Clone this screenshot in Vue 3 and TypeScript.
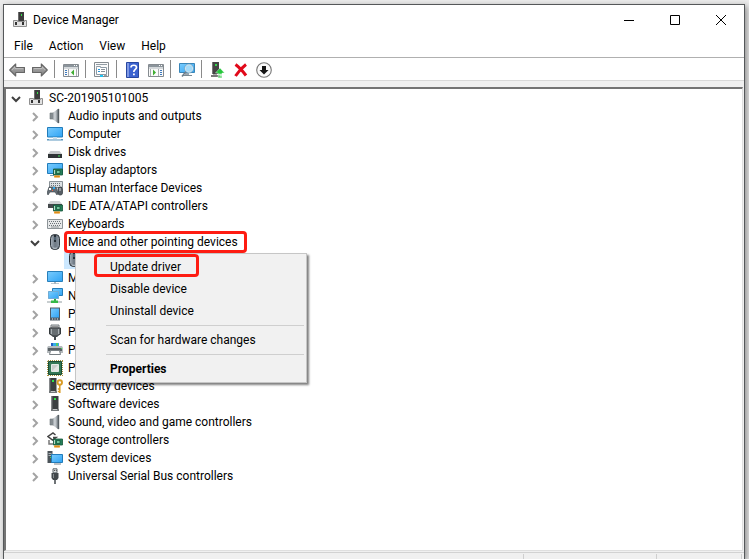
<script setup lang="ts">
interface ToolItem {
  icon?: string
  label?: string
}

interface DeviceNode {
  label: string
  icon: string
  marked?: boolean
}

const menus: string[] = ['File', 'Action', 'View', 'Help']

const tools: ToolItem[] = [
  { icon: 'back', label: 'Back' },
  { icon: 'forward', label: 'Forward' },
  {},
  { icon: 'console-tree', label: 'Show/Hide Console Tree' },
  {},
  { icon: 'properties', label: 'Properties' },
  {},
  { icon: 'help', label: 'Help' },
  { icon: 'action-pane', label: 'Show/Hide Action Pane' },
  {},
  { icon: 'scan', label: 'Scan for hardware changes' },
  {},
  { icon: 'update', label: 'Update device driver' },
  { icon: 'uninstall', label: 'Uninstall device' },
  { icon: 'disable', label: 'Disable device' },
]

const devices: DeviceNode[] = [
  { label: 'Audio inputs and outputs', icon: 'speaker' },
  { label: 'Computer', icon: 'computer' },
  { label: 'Disk drives', icon: 'disk' },
  { label: 'Display adaptors', icon: 'display' },
  { label: 'Human Interface Devices', icon: 'hid' },
  { label: 'IDE ATA/ATAPI controllers', icon: 'ide' },
  { label: 'Keyboards', icon: 'keyboard' },
  { label: 'Mice and other pointing devices', icon: 'mouse', marked: true },
  { label: 'Monitors', icon: 'monitor' },
  { label: 'Network adaptors', icon: 'network' },
  { label: 'Portable Devices', icon: 'portable' },
  { label: 'Ports (COM & LPT)', icon: 'port' },
  { label: 'Print queues', icon: 'printer' },
  { label: 'Processors', icon: 'cpu' },
  { label: 'Security devices', icon: 'security' },
  { label: 'Software devices', icon: 'software' },
  { label: 'Sound, video and game controllers', icon: 'speaker' },
  { label: 'Storage controllers', icon: 'storage' },
  { label: 'System devices', icon: 'system' },
  { label: 'Universal Serial Bus controllers', icon: 'usb' },
]
</script>

<template>
  <svg class="sprite" aria-hidden="true">
    <defs>
      <linearGradient id="screen" x1="0" y1="0" x2="1" y2="1">
        <stop offset="0" stop-color="#7accfd" />
        <stop offset="1" stop-color="#2fa3f4" />
      </linearGradient>
      <linearGradient id="grey" x1="0" y1="0" x2="0" y2="1">
        <stop offset="0" stop-color="#b8b8b8" />
        <stop offset="1" stop-color="#7c7c7c" />
      </linearGradient>
      <linearGradient id="cone" x1="0" y1="0" x2="1" y2="0">
        <stop offset="0" stop-color="#8b9298" />
        <stop offset=".4" stop-color="#d3d8dc" />
        <stop offset="1" stop-color="#6a7278" />
      </linearGradient>
      <linearGradient id="shell" x1="0" y1="0" x2="1" y2="0">
        <stop offset="0" stop-color="#a9b3bc" />
        <stop offset=".5" stop-color="#6d7883" />
        <stop offset="1" stop-color="#8b97a2" />
      </linearGradient>
    </defs>
    <symbol id="root" viewBox="0 0 16 16">
      <path d="M6 0h6v10H6z" fill="#3c3c3c" /><path d="M6 0h1v9H6z" fill="#6c6c6c" />
      <path d="M9 2h1v2H9z" fill="#35e04a" />
      <path d="M1.500 8.500h4v1h7v-1h2v6h-13z" fill="#e2e2e2" stroke="#8f8f8f" />
      <path d="M3 10h2v3H3zM10 10h2v3h-2z" fill="#333" />
    </symbol>
    <symbol id="back" viewBox="0 0 16 16">
      <path d="M.7 8 6.700 2v3.500h8.800v5H6.700V14z" fill="url(#grey)" stroke="#666" stroke-width="1.100" stroke-linejoin="round" />
      <path d="m3 8 3-3v1.600h8" fill="none" stroke="#cfcfcf" stroke-width=".6" />
    </symbol>
    <symbol id="forward" viewBox="0 0 16 16">
      <path d="M15.300 8 9.300 2v3.500H.5v5h8.800V14z" fill="url(#grey)" stroke="#666" stroke-width="1.100" stroke-linejoin="round" />
      <path d="M2 6.500h8.200V5l3 3" fill="none" stroke="#cfcfcf" stroke-width=".6" />
    </symbol>
    <symbol id="console-tree" viewBox="0 0 16 16">
      <path d="M.5 2.500h15v12H.5z" fill="#fafafa" stroke="#858b90" />
      <path d="M1 3h14v2H1z" fill="#8c959c" /><path d="M11 3h1v1h-1zM13 3h1v1h-1z" fill="#fff" />
      <path d="M1 5h14v2H1z" fill="#d4d8db" /><path d="M5.500 7v7M13.500 7v7" stroke="#a8adb0" />
      <path d="M2 8h2v1H2zM2 10h2v1H2zM2 12h2v1H2z" fill="#3b78bd" />
      <path d="m11 7.500-3 3 3 3z" fill="#3fad32" />
    </symbol>
    <symbol id="action-pane" viewBox="0 0 16 16">
      <path d="M.5 2.500h15v12H.5z" fill="#fafafa" stroke="#858b90" />
      <path d="M1 3h14v2H1z" fill="#8c959c" /><path d="M11 3h1v1h-1zM13 3h1v1h-1z" fill="#fff" />
      <path d="M1 5h14v2H1z" fill="#d4d8db" /><path d="M2.500 7v7M10.500 7v7" stroke="#a8adb0" />
      <path d="M12 8h2v1h-2zM12 10h2v1h-2zM12 12h2v1h-2z" fill="#3b78bd" />
      <path d="m5 7.500 3 3-3 3z" fill="#3fad32" />
    </symbol>
    <symbol id="properties" viewBox="0 0 16 16">
      <path d="M.5.500h14v14H.5z" fill="#fafafa" stroke="#858b90" />
      <path d="M2 2h11v1H2z" fill="#929ca4" />
      <path d="M2.500 5.500v-1h4v1h6v7h-10z" fill="#fff" stroke="#8d9aa5" />
      <path d="M4 7h2v1H4zM4 9h2v1H4z" fill="#2196dc" />
      <path d="M7 7.500h4M7 9.500h4" stroke="#889199" />
      <path d="M6 13h3v2H6z" fill="#20c4f4" /><path d="M10 13h3v1h-3z" fill="#9aa0a5" />
    </symbol>
    <symbol id="help" viewBox="0 0 16 16">
      <path d="M1.500.5h12v15h-12z" fill="#3b63d0" stroke="#2847a0" />
      <path d="M2 1h2v14H2z" fill="#7e98e4" />
      <path d="M6 5.500c0-3 5.500-3 5.500 0 0 2-2.700 2-2.700 4.500" fill="none" stroke="#fff" stroke-width="1.700" />
      <path d="M8 11.500h1.800v1.800H8z" fill="#fff" />
    </symbol>
    <symbol id="scan" viewBox="0 0 16 16">
      <path d="M.5 1.500h15v9H.5z" fill="url(#screen)" stroke="#3a86b8" />
      <path d="M6 11h4v2H6z" fill="#9aa7b0" /><path d="M3 13h10v1H3z" fill="#7b8a93" />
      <path d="m7 9.500-4 5" stroke="#6f7f8c" stroke-width="1.600" />
      <circle cx="10" cy="6.500" r="3.800" fill="#a2daf9" stroke="#d9e6ed" stroke-width="1.200" />
      <circle cx="10" cy="6.500" r="4.500" fill="none" stroke="#6a9dbd" stroke-width=".6" />
    </symbol>
    <symbol id="update" viewBox="0 0 16 16">
      <path d="M2 0h7v12H2z" fill="#444" /><path d="M2 0h1v12H2z" fill="#777" />
      <path d="M5 2h2v2H5z" fill="#32d34b" />
      <path d="M1 13h9v2H1z" fill="#777" /><path d="M3 12h4v1H3z" fill="#aaa" />
      <path d="m10 6 4.500 5h-2.500v1H8v-1H5.500zM8 12.500h4v1H8zM8 14.200h4v1.500H8z" fill="#25c63b" stroke="#fff" stroke-width=".4" />
    </symbol>
    <symbol id="uninstall" viewBox="0 0 16 16">
      <path d="M2.500 2.500C6 5 10 9.500 13 13.500M13 2.500C9 5.500 5.500 9.500 2.500 14" fill="none" stroke="#e1091a" stroke-width="3" />
    </symbol>
    <symbol id="disable" viewBox="0 0 16 16">
      <circle cx="8" cy="8" r="7.300" fill="#fafafa" stroke="#777" stroke-width="1.100" />
      <path d="M6 4h4v4h2.500L8 12.500 3.500 8H6z" fill="#151515" />
    </symbol>
    <symbol id="speaker" viewBox="0 0 16 16">
      <path d="M3 5h3v6H3z" fill="#858c91" stroke="#6d757a" stroke-width=".6" />
      <path d="M5.500 5 11.500.5v15L5.500 11z" fill="url(#cone)" />
      <path d="M11.500 1v14" stroke="#565e63" stroke-width="1.400" />
    </symbol>
    <symbol id="computer" viewBox="0 0 16 16">
      <path d="M.5 1.500h15v9.500H.5z" fill="url(#screen)" stroke="#227cba" />
      <path d="M6 11h4v2H6z" fill="#c9dce8" /><path d="M0 13h16v1.500H0z" fill="#5b97be" /><path d="M2 13h12v.6H2z" fill="#d5e5ef" />
    </symbol>
    <symbol id="monitor" viewBox="0 0 16 16">
      <path d="M.5 1.500h15v10H.5z" fill="url(#screen)" stroke="#287fba" />
      <path d="M7 12h2v1.500H7zM4 13.200h8v.8H4z" fill="#a9b9c3" />
    </symbol>
    <symbol id="disk" viewBox="0 0 16 16">
      <path d="M3.500 7h9l2.500 3H1z" fill="#c6c9ca" /><path d="M1 10h14v4H1z" fill="#303436" /><path d="M11 11.500h2v1h-2z" fill="#45e45a" />
    </symbol>
    <symbol id="chip" viewBox="0 0 16 16">
      <path d="M6.500 7h9v6h-9z" fill="#25805a" stroke="#145437" stroke-width=".8" />
      <path d="M9.500 8.500H13v3H9.500z" fill="#72c59a" stroke="#154c33" stroke-width=".7" />
      <path d="M7 8h1v4H7z" fill="#bfd6c9" /><path d="M7 13.500h6v2H7z" fill="#ef9d20" /><path d="M9 13.500v2M11 13.500v2" stroke="#a65b0b" stroke-width=".5" />
    </symbol>
    <symbol id="display" viewBox="0 0 16 16">
      <path d="M.5 1.500h15v10H.5z" fill="url(#screen)" stroke="#227cba" /><path d="M3 13.500h4" stroke="#7da1b7" />
      <use href="#chip" width="16" height="16" />
    </symbol>
    <symbol id="hid" viewBox="0 0 16 16">
      <path d="M2.500 1.500h13v6h-13z" fill="#dce1e4" stroke="#899196" />
      <path d="M4 3.500h10M4 5.500h10" stroke="#697277" stroke-dasharray="1 1" />
      <path d="M2 7h7l2 6-1 2-2-3H3l-2 3-1-2z" fill="#626b73" stroke="#394147" stroke-width=".6" />
      <path d="M2 8h2v2H2z" fill="#fff" /><path d="M6 7h2v2H6z" fill="#30a8ec" /><path d="M5 10h1v1H5z" fill="#ef6349" />
      <rect x="11" y="7" width="4.500" height="8" rx="2" fill="#565e65" stroke="#2e3539" stroke-width=".7" /><path d="M13 8v3" stroke="#d5dade" />
    </symbol>
    <symbol id="ide" viewBox="0 0 16 16">
      <path d="M3.500 3h9L15 6H1z" fill="#cfd2d3" /><path d="M1 6h14v4H1z" fill="#44494b" />
      <use href="#chip" width="16" height="16" />
    </symbol>
    <symbol id="keyboard" viewBox="0 0 16 16">
      <path d="M.5 3.500h15v9H.5z" fill="#e6e8e9" stroke="#8d9498" />
      <path d="M2 5.500h12M2 9.500h12" stroke="#6b7378" stroke-dasharray="1 1" /><path d="M3 7.500h11" stroke="#6b7378" stroke-dasharray="1 1" /><path d="M4 11h8" stroke="#6b7378" stroke-width=".7" />
    </symbol>
    <symbol id="mouse" viewBox="0 0 16 16">
      <rect x="3.500" y=".5" width="9" height="15" rx="4" fill="url(#shell)" stroke="#2c3339" />
      <path d="M7 1h2v7H7z" fill="#262e35" /><path d="M8 3v3" stroke="#8fb4d2" stroke-width=".8" />
      <path d="M6 14q2 .7 4 0" fill="none" stroke="#c3ccd3" />
    </symbol>
    <symbol id="network" viewBox="0 0 16 16">
      <path d="M5.500.5h10v7h-10z" fill="url(#screen)" stroke="#227cba" /><path d="M1.500 3.500h10v7h-10z" fill="url(#screen)" stroke="#e4f3fc" /><path d="M1.500 3.500h10v7h-10z" fill="none" stroke="#227cba" stroke-width=".6" />
      <path d="M7 11h2v2H7z" fill="#2ea942" /><path d="M0 13h15v2H0z" fill="#c8ced0" /><path d="M4 12.500h7V15H4z" fill="#35b948" />
    </symbol>
    <symbol id="portable" viewBox="0 0 16 16">
      <path d="M3 1.500h10v13H3z" fill="#505c66" /><path d="M4 2.500h8v9H4z" fill="url(#screen)" /><path d="M5 13h1M7.500 13h1M10 13h1" stroke="#e8edf0" />
    </symbol>
    <symbol id="port" viewBox="0 0 16 16">
      <path d="M4 1h8v3H4z" fill="#d5d8da" stroke="#747a7e" /><path d="M5.500 2.500h5" stroke="#555" stroke-dasharray="1 1" />
      <path d="M2.500 4h11v6L10 12H6l-3.500-2z" fill="#666d71" stroke="#34393c" /><path d="M4.500 5v5M11.500 5v5" stroke="#a8afb3" /><path d="M5.500 12h5v1h-5z" fill="#43494d" /><path d="M8 13v3" stroke="#43494d" stroke-width="2" />
    </symbol>
    <symbol id="printer" viewBox="0 0 16 16">
      <path d="M4 1h8v5H4z" fill="#36aee8" /><path d="M4 1h2v5H4z" fill="#245ec0" /><path d="M9 1h2v5H9z" fill="#53c865" />
      <path d="M1 4h14l1 2v5H0V6z" fill="#b5babd" /><path d="M1 6h14v3H1z" fill="#5a6165" /><path d="M14 6h1v1h-1z" fill="#39e64b" />
      <path d="M3.500 8.500h9l1 4h-11z" fill="#fff" stroke="#777f83" />
    </symbol>
    <symbol id="cpu" viewBox="0 0 16 16">
      <path d="M1 .5h15M1 15.500h15M.5 1v15M15.500 1v15" stroke="#a58f3b" stroke-dasharray="1 1" />
      <path d="M1.500 1.500h13v13h-13z" fill="#347755" stroke="#194d35" /><path d="M4.500 4.500h7v7h-7z" fill="#c9cdca" stroke="#e2ebe6" />
      <path d="m5 11 6-6v6z" fill="#e3e6e4" />
    </symbol>
    <symbol id="tower" viewBox="0 0 16 16">
      <path d="M4.500 0h7v13h-7z" fill="#3b3f41" /><path d="M4.500 0h1v13h-1z" fill="#6e7375" /><path d="M7 2h2v2H7z" fill="#2fe447" /><path d="M4 13h8v2H4z" fill="#74797b" /><path d="M6 13h4v1H6z" fill="#c1c4c5" />
    </symbol>
    <symbol id="software" viewBox="0 0 16 16"><use href="#tower" width="16" height="16" /></symbol>
    <symbol id="security" viewBox="0 0 16 16">
      <use href="#tower" x="-2" width="16" height="16" />
      <circle cx="12.800" cy="4.500" r="2.200" fill="none" stroke="#d99b24" stroke-width="1.900" />
      <path d="M12.800 7v8M12.800 11h-2M12.800 13.500h-2" stroke="#d99b24" stroke-width="1.500" />
    </symbol>
    <symbol id="storage" viewBox="0 0 16 16">
      <path d="M8.500 3 6 1 1 4.500 5.500 8 9 5.500H6" fill="none" stroke="#444" stroke-width="1.500" /><path d="M2 8v4h4" fill="none" stroke="#777" stroke-width="1.500" />
      <use href="#chip" width="16" height="16" />
    </symbol>
    <symbol id="system" viewBox="0 0 16 16">
      <path d="M.5 1h5v12h-5z" fill="#4b5358" /><path d="M1.500 3.500h3M1.500 5.500h3" stroke="#aab1b5" /><path d="M3 7h1v1H3z" fill="#38e153" />
      <path d="M4.500 4.500h11v8h-11z" fill="url(#screen)" stroke="#227cba" /><path d="M7 14h7" stroke="#79838a" />
    </symbol>
    <symbol id="usb" viewBox="0 0 16 16">
      <path d="M6 .8h4v4H6z" fill="#dfe2e3" stroke="#5f676b" /><path d="M7 2.500h.8M8.800 2.500h.8" stroke="#333" />
      <path d="M4.500 5h7v5L10 12H6l-1.500-2z" fill="#42484b" /><path d="M6 6h1v4H6z" fill="#858c90" /><path d="M8 12v4" stroke="#555b5f" stroke-width="1.700" />
    </symbol>
  </svg>

  <div class="desktop">
    <main class="window">
      <header class="titlebar">
        <svg class="icon"><use href="#root" /></svg>
        <h1>Device Manager</h1>
        <button type="button" aria-label="Minimise"><svg viewBox="0 0 10 10"><path d="M0 5.500h10" /></svg></button>
        <button type="button" aria-label="Maximise"><svg viewBox="0 0 10 10"><path d="M.5.500h9v9h-9z" /></svg></button>
        <button type="button" aria-label="Close"><svg viewBox="0 0 10 10"><path d="m0 0 10 10M10 0 0 10" /></svg></button>
      </header>

      <nav class="menubar">
        <button v-for="menu in menus" :key="menu" type="button">{{ menu }}</button>
      </nav>

      <div class="toolbar">
        <template v-for="(tool, index) in tools" :key="index">
          <button v-if="tool.icon" type="button" :aria-label="tool.label">
            <svg class="icon"><use :href="'#' + tool.icon" /></svg>
          </button>
          <span v-else class="divider"></span>
        </template>
      </div>

      <section class="tree">
        <div class="row root">
          <button type="button" class="arrow open" aria-label="Collapse"><svg viewBox="0 0 10 10"><path d="m1 3 4 4 4-4" /></svg></button>
          <svg class="icon"><use href="#root" /></svg>
          <span class="label">SC-201905101005</span>
        </div>
        <ul>
          <li v-for="device in devices" :key="device.label">
            <div class="row">
              <button type="button" class="arrow" :class="{ open: device.marked }" :aria-label="device.marked ? 'Collapse' : 'Expand'">
                <svg viewBox="0 0 10 10"><path :d="device.marked ? 'm1 3 4 4 4-4' : 'm3 1 4 4-4 4'" /></svg>
              </button>
              <svg class="icon"><use :href="'#' + device.icon" /></svg>
              <span class="label" :class="{ marked: device.marked }">{{ device.label }}</span>
            </div>
            <div v-if="device.marked" class="selected">
              <div class="highlight"><svg class="icon"><use href="#mouse" /></svg></div>
              <div class="context">
                <button type="button" class="marked">Update driver</button>
                <button type="button">Disable device</button>
                <button type="button">Uninstall device</button>
                <hr />
                <button type="button">Scan for hardware changes</button>
                <hr />
                <button type="button" class="default">Properties</button>
              </div>
            </div>
          </li>
        </ul>
      </section>

      <footer class="status"><span></span><span></span><span></span></footer>
    </main>
  </div>
</template>

<style>
body {
  background: #ebebeb;
}
</style>

<style scoped>
.sprite {
  position: absolute;
  width: 0;
  height: 0;
}
.desktop {
  box-sizing: border-box;
  height: 100vh;
  padding: 4px 4px 0 3px;
  overflow: hidden;
  font: 12px/18px Roboto, "Open Sans", sans-serif;
  color: #000;
}
.window {
  box-sizing: border-box;
  display: flex;
  flex-direction: column;
  height: 100%;
  border: 1px solid #55585a;
  border-bottom: 0;
  background: #fff;
  box-shadow: 2px 2px 6px rgba(0, 0, 0, 0.4);
}
button {
  padding: 0;
  border: 0;
  background: none;
  font: inherit;
  color: inherit;
}
.icon {
  display: block;
  flex: none;
  width: 16px;
  height: 16px;
}
.titlebar {
  display: flex;
  align-items: center;
  height: 30px;
  padding-left: 8px;
}
.titlebar h1 {
  flex: 1;
  margin: 0 0 0 5px;
  font-size: 12px;
  font-weight: 400;
}
.titlebar button {
  display: grid;
  place-items: center;
  width: 46px;
  height: 30px;
}
.titlebar button svg {
  width: 10px;
  height: 10px;
  overflow: visible;
  fill: none;
  stroke: #000;
}
.menubar {
  display: flex;
  gap: 16px;
  height: 22px;
  padding: 0 10px;
  border-bottom: 1px solid #b0b0b0;
}
.toolbar {
  display: flex;
  align-items: center;
  height: 22px;
  padding-left: 1px;
  border-bottom: 1px solid #d9d9d9;
}
.toolbar button {
  padding: 4px 3px 2px 4px;
}
.divider {
  width: 1px;
  height: 18px;
  margin: 0 4px 0 3px;
  background: #8a8a8a;
}
.tree {
  flex: 1;
  min-height: 0;
  border: solid;
  border-width: 2px 1px 1px 2px;
  border-color: #747474 #dfdfdf #dfdfdf #747474;
  outline: 6px solid #f0f0f0;
  outline-offset: 0;
  margin: 6px 1px 1px 0;
  clip-path: inset(-6px -1px -1px 0);
}
.tree ul {
  margin: 0;
  padding: 0 0 0 19px;
  list-style: none;
}
.row {
  display: flex;
  align-items: center;
  height: 18px;
  padding-left: 5px;
}
.arrow {
  flex: none;
  width: 10px;
  height: 10px;
  margin: 2px 7px 0 0;
}
.arrow svg {
  display: block;
  fill: none;
  stroke: #a3a3a3;
  stroke-width: 2;
}
.arrow.open svg {
  stroke: #404040;
}
.label {
  margin-left: 1px;
  padding: 0 4px;
  white-space: nowrap;
}
.label.marked {
  position: relative;
  z-index: 2;
}
.marked::after {
  content: "";
  position: absolute;
  border: 3px solid #fe1c12;
  border-radius: 4px;
}
.label.marked::after {
  inset: -2px -5px -2px 0;
}
.selected {
  position: relative;
  padding-left: 39px;
}
.highlight {
  width: 150px;
  height: 18px;
  padding-left: 2px;
  background: #cce8ff;
}
.context {
  position: absolute;
  z-index: 1;
  top: 2px;
  left: 50px;
  box-sizing: border-box;
  width: 232px;
  padding: 2px;
  border: 1px solid #c6c6c6;
  background: #f1f1f1;
  box-shadow: 2px 2px 2px rgba(0, 0, 0, 0.5);
}
.context button {
  position: relative;
  display: block;
  width: 100%;
  height: 22px;
  padding-left: 32px;
  text-align: left;
}
.context .marked::after {
  inset: -2px 105px 1px 16px;
}
.context .default {
  font-weight: 700;
}
.context hr {
  height: 1px;
  margin: 3px 0 3px 28px;
  border: 0;
  background: #cfcfcf;
}
.status {
  display: flex;
  flex: none;
  height: 5px;
  padding: 1px 2px 0 0;
  border-top: 1px solid #d2d2d2;
  background: #f0f0f0;
}
.status span {
  box-sizing: border-box;
  width: 85px;
  border-right: 1px solid #cfcfcf;
}
.status span:first-child {
  flex: 1;
}
.status span:nth-child(2) {
  width: 133px;
}
</style>
